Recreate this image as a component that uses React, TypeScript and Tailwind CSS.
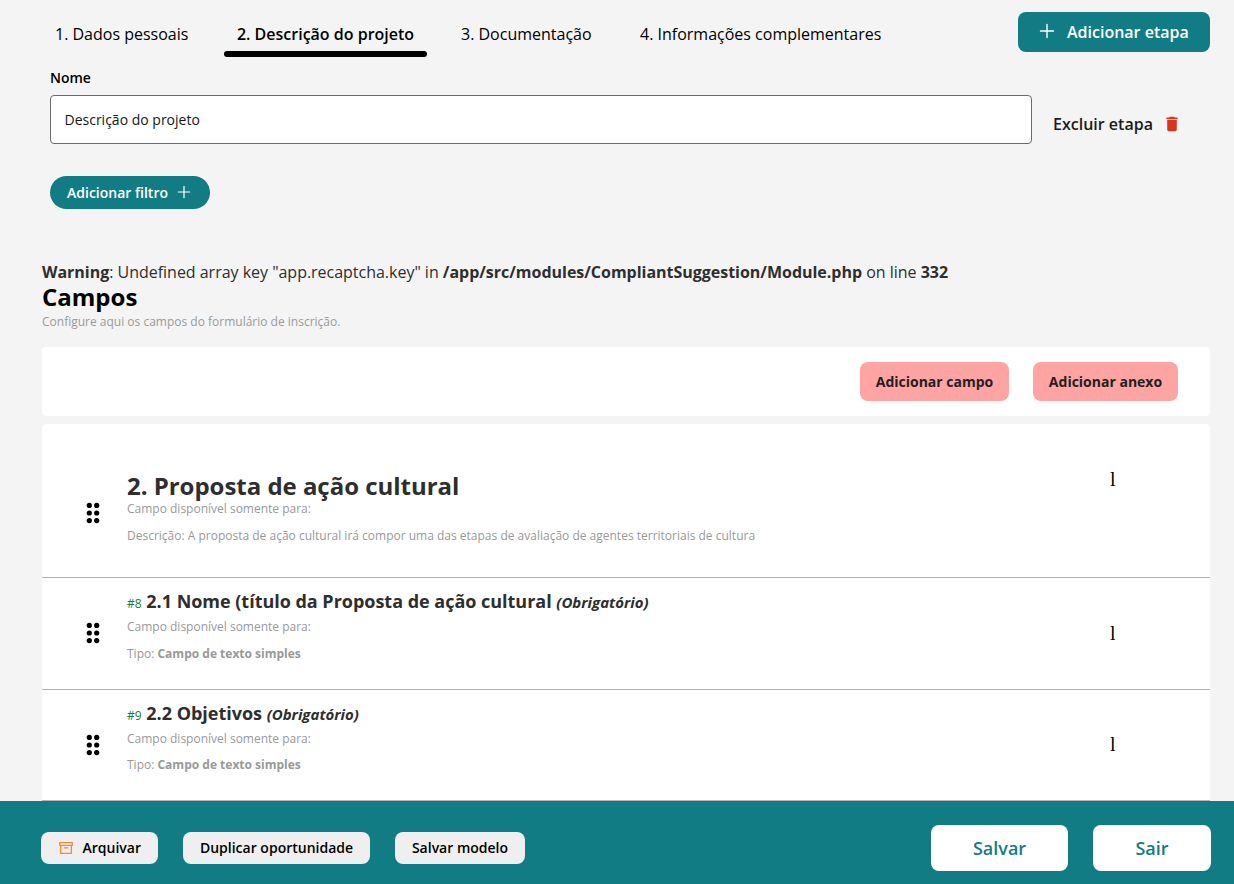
import React from "react";

const tabs = [
  { label: "1. Dados pessoais", width: "w-[182px]" },
  { label: "2. Descrição do projeto", width: "w-[224px]", active: true },
  { label: "3. Documentação", width: "w-[179px]" },
  { label: "4. Informações complementares", width: "w-[280px]" },
];

const fields = [
  { id: "#8", title: "2.1 Nome (título da Proposta de ação cultural", height: "h-28", gap: "mt-2.5", mark: "pt-[43px]" },
  { id: "#9", title: "2.2 Objetivos", height: "h-[111px]", gap: "mt-[9px]", mark: "pt-[42px]" },
];

function Plus({ className }: { className: string }) {
  return (
    <svg viewBox="0 0 16 16" className={className} fill="none" stroke="currentColor" strokeWidth="1.4" strokeLinecap="round">
      <path d="M8 1.5v13M1.5 8h13" />
    </svg>
  );
}

function Trash() {
  return (
    <svg viewBox="0 0 20 20" className="h-4 w-4 text-[#d8351b]" fill="currentColor">
      <path d="M17 2h-3.5l-1-1h-5l-1 1H3v2h14zM4 17a2 2 0 0 0 2 2h8a2 2 0 0 0 2-2V5H4z" />
    </svg>
  );
}

function Archive() {
  return (
    <svg viewBox="0 0 14 12" className="h-3 w-3.5 text-[#f28a2e]" fill="none" stroke="currentColor" strokeWidth="1.3" strokeLinejoin="round">
      <path d="M.7.7h12.6v2.6H.7zM1.6 3.3v8h10.8v-8M4.8 5.8h4.4" />
    </svg>
  );
}

function Handle() {
  return (
    <svg viewBox="0 0 14 22" className="h-[22px] w-3.5 text-black" fill="currentColor">
      {[3.4, 11, 18.6].map((y) => (
        <g key={y}>
          <circle cx="3.3" cy={y} r="2.6" />
          <circle cx="10.7" cy={y} r="2.6" />
        </g>
      ))}
    </svg>
  );
}

function Mark() {
  return <span className="font-['Liberation_Serif',serif] text-[20px] leading-6 text-black">l</span>;
}

export default function App() {
  return (
    <div className="flex h-[884px] w-[1234px] flex-col overflow-hidden bg-[#f4f4f4] font-['Open_Sans',sans-serif] text-base leading-[22px] text-[#2e2e2e]">
      <header className="flex h-[57px] shrink-0 justify-between pr-6 pl-[42px]">
        <nav className="flex items-end text-black">
          {tabs.map((t) => (
            <div key={t.label} className={t.width}>
              <div
                className={
                  t.active
                    ? "relative flex h-[34px] w-[203px] justify-center font-semibold"
                    : "flex h-[34px] pl-[13px] whitespace-nowrap"
                }
              >
                {t.label}
                {t.active && <span className="absolute bottom-0 left-0 h-1.5 w-full rounded-full bg-black" />}
              </div>
            </div>
          ))}
        </nav>
        <button className="mt-3 flex h-10 w-48 items-center rounded-lg bg-[#117c83] pl-[21px] font-semibold text-white">
          <Plus className="mr-3 -mt-0.5 h-4 w-4" />
          Adicionar etapa
        </button>
      </header>

      <section className="flex h-[87px] shrink-0 pl-[50px]">
        <div className="w-[982px]">
          <label className="flex h-[38px] items-center pt-1 text-sm font-semibold text-black">Nome</label>
          <div className="flex h-[49px] items-center rounded border border-[#6b6b6b] bg-white px-[13.5px] text-sm text-[#161616]">
            Descrição do projeto
          </div>
        </div>
        <div className="mt-14 flex h-[22px] items-center gap-[11px] pl-[21px] text-[#1b1b1b]">
          <span className="font-semibold">Excluir etapa</span>
          <Trash />
        </div>
      </section>

      <div className="mt-8 h-[33px] shrink-0 pl-[50px]">
        <button className="flex h-[33px] w-40 items-center rounded-full bg-[#117c83] pl-[17px] text-sm font-semibold text-white">
          Adicionar filtro
          <Plus className="-mt-0.5 ml-[9px] h-3.5 w-3.5" />
        </button>
      </div>

      <main className="flex min-h-0 flex-1 flex-col pt-[52px] pr-6 pl-[42px]">
        <p className="h-[21px] shrink-0 tracking-[-0.02px]">
          <b>Warning</b>: Undefined array key "app.recaptcha.key" in{" "}
          <b>/app/src/modules/CompliantSuggestion/Module.php</b> on line <b>332</b>
        </p>
        <h1 className="h-[31px] shrink-0 text-2xl leading-[30px] font-bold text-black">Campos</h1>
        <p className="h-[34px] shrink-0 text-xs leading-[17px] text-[#9a9a9a]">
          Configure aqui os campos do formulário de inscrição.
        </p>

        <div className="flex h-[69px] shrink-0 items-center justify-end gap-6 rounded bg-white pr-8 text-sm font-bold text-[#1f1f1f]">
          <button className="h-[39px] w-[149px] rounded-lg bg-[#ffa3a3]">Adicionar campo</button>
          <button className="h-[39px] w-[145px] rounded-lg bg-[#ffa3a3]">Adicionar anexo</button>
        </div>

        <ul className="mt-2 min-h-0 flex-1 rounded-t bg-white text-xs leading-[17px] text-[#999]">
          <li className="flex h-[154px] border-b border-[#b3b3b3] pl-11">
            <div className="mt-[78px] w-[41px]"><Handle /></div>
            <div className="flex-1 pt-[47px]">
              <h2 className="h-[29px] text-2xl leading-[30px] font-bold tracking-[-0.03px] text-[#2e2e2e]">2. Proposta de ação cultural</h2>
              <p>Campo disponível somente para:</p>
              <p className="mt-2.5">
                Descrição: A proposta de ação cultural irá compor uma das etapas de avaliação de agentes territoriais de cultura
              </p>
            </div>
            <div className="w-[100px] pt-[43px]"><Mark /></div>
          </li>
          {fields.map((f) => (
            <li key={f.id} className={`flex border-b border-[#b3b3b3] pl-11 ${f.height}`}>
              <div className="mt-11 w-[41px]"><Handle /></div>
              <div className="flex-1 pt-[11px]">
                <h3 className="h-[29px] text-lg leading-6 font-bold text-[#2e2e2e]">
                  <span className="text-xs font-normal text-[#1f7a2b]">{f.id}</span>{" "}
                  <span className="tracking-[-0.02px]">{f.title}</span>{" "}
                  <i className="text-[15px]">(Obrigatório)</i>
                </h3>
                <p>Campo disponível somente para:</p>
                <p className={f.gap}>Tipo: <b>Campo de texto simples</b></p>
              </div>
              <div className={`w-[100px] ${f.mark}`}><Mark /></div>
            </li>
          ))}
        </ul>
      </main>

      <footer className="flex h-[83px] shrink-0 justify-between bg-[#117c83] pr-[23px] pl-[41px]">
        <div className="flex gap-[25px] pt-[31px] text-sm font-semibold text-black">
          <button className="flex h-8 w-[117px] items-center gap-[9.5px] rounded-lg bg-[#efefef] pl-[18px]">
            <Archive />
            Arquivar
          </button>
          <button className="h-8 w-[187px] rounded-lg bg-[#efefef]">Duplicar oportunidade</button>
          <button className="h-8 w-[130px] rounded-lg bg-[#efefef]">Salvar modelo</button>
        </div>
        <div className="flex gap-[25px] pt-6 text-lg font-semibold text-[#117c83]">
          <button className="h-[46px] w-[137px] rounded-lg bg-white">Salvar</button>
          <button className="h-[46px] w-[118px] rounded-lg bg-white">Sair</button>
        </div>
      </footer>
    </div>
  );
}
